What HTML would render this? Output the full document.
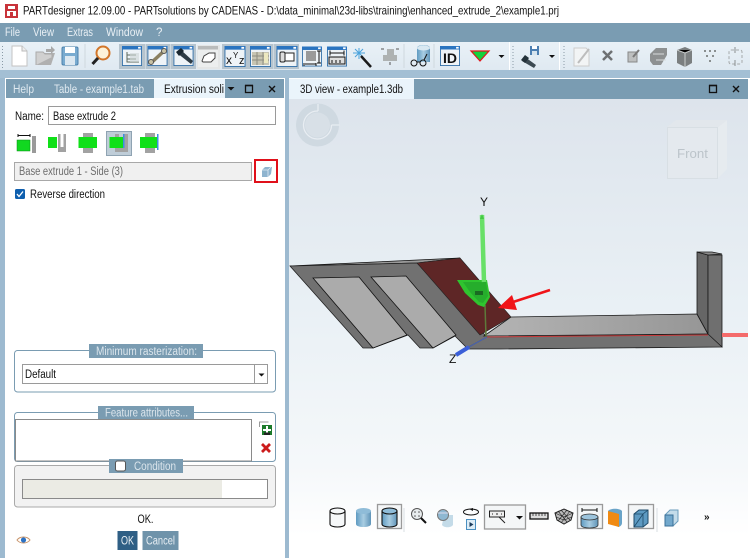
<!DOCTYPE html>
<html><head><meta charset="utf-8"><style>
html,body{margin:0;padding:0;background:#9dbad0;width:750px;height:558px;overflow:hidden}
svg{display:block;filter:blur(.3px)}
text{font-family:"Liberation Sans",sans-serif;font-size:11.5px;fill:#111}
</style></head><body>
<svg width="750" height="558" viewBox="0 0 750 558" xmlns="http://www.w3.org/2000/svg">
<defs>
<linearGradient id="vp" x1="0" y1="0" x2="0" y2="1"><stop offset="0" stop-color="#dde4ec"/><stop offset=".45" stop-color="#e9f0f5"/><stop offset=".8" stop-color="#f5f8fa"/><stop offset=".95" stop-color="#fff"/></linearGradient>
<linearGradient id="tb" x1="0" y1="0" x2="0" y2="1"><stop offset="0" stop-color="#e9f1f7"/><stop offset="1" stop-color="#dfe9f1"/></linearGradient>
<linearGradient id="cyl" x1="0" y1="0" x2="1" y2="0"><stop offset="0" stop-color="#5f9bc2"/><stop offset=".5" stop-color="#a9cde2"/><stop offset="1" stop-color="#5f94b8"/></linearGradient>
<linearGradient id="flr" x1="0" y1="0" x2="1" y2="0"><stop offset="0" stop-color="#b4b4b4"/><stop offset="1" stop-color="#969696"/></linearGradient>
<symbol id="win" viewBox="0 0 23 23"><rect x=".5" y=".5" width="22" height="22" fill="#eef3f7" stroke="#2f6da6"/><rect x="0" y="0" width="23" height="4" fill="#2a74c0"/><rect x="18.500" y="1" width="3" height="2" fill="#fff"/></symbol>
</defs>

<!-- title bar -->
<rect x="0" y="0" width="750" height="23" fill="#fff"/>
<rect x="5" y="4" width="13" height="14" fill="#c8333a"/>
<rect x="8" y="6" width="7" height="3" fill="#fff"/><rect x="7" y="11" width="9" height="5" fill="#fff"/><rect x="10" y="12" width="3" height="4" fill="#c8333a"/>
<text x="23" y="14.500" textLength="536" lengthAdjust="spacingAndGlyphs" style="font-size:12px">PARTdesigner 12.09.00 - PARTsolutions by CADENAS - D:\data_minimal\23d-libs\training\enhanced_extrude_2\example1.prj</text>

<!-- menu -->
<rect x="0" y="23" width="750" height="19" fill="#7a9cb2"/>
<text x="5" y="36" textLength="15" lengthAdjust="spacingAndGlyphs" style="fill:#e8eff4">File</text>
<text x="33" y="36" textLength="21" lengthAdjust="spacingAndGlyphs" style="fill:#e8eff4">View</text>
<text x="67" y="36" textLength="26" lengthAdjust="spacingAndGlyphs" style="fill:#e8eff4">Extras</text>
<text x="106" y="36" textLength="37" lengthAdjust="spacingAndGlyphs" style="fill:#e8eff4">Window</text>
<text x="156" y="36" style="fill:#e8eff4">?</text>

<!-- toolbar -->
<rect x="0" y="42" width="750" height="28" fill="url(#tb)"/>
<rect x="0" y="70" width="750" height="8" fill="#a3bfd4"/>
<rect x="509" y="42" width="1" height="28" fill="#fff"/><rect x="559" y="42" width="1" height="28" fill="#fff"/>
<path d="M2.500 46v22M513 46v22M564 46v22" stroke="#8a9aa6" stroke-width="1" stroke-dasharray="1 2"/>
<!-- new -->
<path d="M12 46h10l5 5v15H12z" fill="#fff" stroke="#c3c3c3"/><path d="M22 46v5h5" fill="#eee" stroke="#bbb"/>
<!-- open -->
<path d="M36 65l4-12h15l-4 12z" fill="#b0b0b0"/><path d="M36 65V52h7l2 2h7v3" fill="#d0d0d0" stroke="#aaa"/><path d="M46 49h5v-3l4 4-4 4v-2h-5z" fill="#a8a8a8"/>
<!-- save -->
<rect x="62" y="47" width="16" height="18" rx="1.500" fill="#79abd0" stroke="#4d82ab"/><rect x="65" y="47" width="10" height="6" fill="#fff"/><rect x="65" y="56" width="10" height="9" fill="#dce8f1"/>
<path d="M85 44v24" stroke="#cfd8de"/>
<!-- search -->
<circle cx="103" cy="53" r="6.500" fill="#fdf2d8" stroke="#d2762a" stroke-width="2"/><path d="M98 58l-5.500 6" stroke="#222" stroke-width="3"/>
<!-- pressed backgrounds -->
<g fill="#b6c4ce"><rect x="119" y="44" width="26" height="25"/><rect x="145.500" y="44" width="25" height="25"/><rect x="171" y="44" width="25" height="25"/><rect x="222" y="44" width="26" height="25"/><rect x="247.500" y="44" width="26" height="25"/><rect x="274" y="44" width="25" height="25"/></g>
<rect x="197" y="45" width="23" height="24" fill="#e4e6e6"/>
<!-- window icons -->
<use href="#win" x="122" y="46" width="20" height="20"/>
<path d="M127 52v10h12M127 55h9M127 59h9" fill="none" stroke="#5d6a5d"/><rect x="130" y="53" width="9" height="9" fill="#cdd6d6" opacity=".6"/>
<use href="#win" x="147" y="46" width="21" height="20"/>
<path d="M151 63l13-12" stroke="#8b8060" stroke-width="3.500"/><circle cx="151" cy="62" r="2.500" fill="#c9c2a5" stroke="#555"/><circle cx="164" cy="51" r="2.500" fill="#c9c2a5" stroke="#555"/>
<use href="#win" x="173" y="46" width="21" height="20"/>
<path d="M177 53l4-3 12 11-2 3z" fill="#2e3b44"/><path d="M176 52l5-4 3 3-5 5z" fill="#1c2830"/>
<rect x="198" y="46" width="20" height="21" fill="#eceeee"/><rect x="198" y="46" width="20" height="3.500" fill="#b9bbbb"/>
<path d="M202 61l2-5 5-3h6v5l-4 4h-8z" fill="#fff" stroke="#444"/>
<use href="#win" x="224" y="46" width="22" height="21"/>
<text x="226" y="64" style="font-size:12px">x</text><text x="233" y="58" style="font-size:8px">Y</text><text x="239" y="64" style="font-size:11px">z</text>
<use href="#win" x="250" y="46" width="21" height="21"/>
<rect x="252" y="52" width="17" height="13" fill="#c7c5b3"/><path d="M252 56h17M252 60h17M257 52v13M263 52v13" stroke="#8d8d80"/><rect x="264" y="53" width="4" height="10" fill="#ece8c0"/>
<use href="#win" x="276" y="46" width="22" height="21"/>
<rect x="282" y="53" width="12" height="8" fill="#fff" stroke="#222"/><rect x="280" y="52" width="5" height="10" rx="1.500" fill="#ddd" stroke="#222"/>
<use href="#win" x="302" y="46" width="20" height="21"/>
<rect x="306" y="51" width="10" height="10" fill="#9a9a9a"/><path d="M319 51v12M305 64h11M317 51h4M317 63h4M304 63v3M316 63v3" stroke="#111"/>
<use href="#win" x="327" y="46" width="20" height="21"/>
<rect x="329" y="57" width="16" height="7" fill="#ddd" stroke="#111"/><path d="M330 53h14M330 50.500v5M344 50.500v5M332 60v3M336 60v3M340 60v3" stroke="#111"/>
<path d="M359 48v11M353 53h12M355 49l8 8M363 49l-8 8" stroke="#4aa3dc"/><path d="M361 56l10 11" stroke="#1a1a1a" stroke-width="2.500"/>
<!-- right tool icons -->
<g fill="#aeb2b2"><rect x="387" y="49" width="7" height="6"/><rect x="383" y="55" width="7" height="6"/><rect x="390" y="55" width="7" height="6"/></g>
<path d="M381 49h3M396 49h3M390 62v3" stroke="#555"/>
<path d="M404 44v24" stroke="#cfd8de"/>
<path d="M417 48c0-4 13-4 13 0v14h-13z" fill="url(#cyl)"/><ellipse cx="423.500" cy="48" rx="6.500" ry="2.500" fill="#d8e8f2"/>
<circle cx="414" cy="63" r="3" fill="none" stroke="#111"/><circle cx="423" cy="63" r="3" fill="none" stroke="#111"/><path d="M417 62h3M424 60l3-6" stroke="#111"/>
<path d="M434 44v24" stroke="#cfd8de"/>
<use href="#win" x="440" y="45" width="20" height="22"/>
<text x="443" y="63" textLength="14" lengthAdjust="spacingAndGlyphs" style="font-size:14px;font-weight:bold">ID</text>
<path d="M471 51h18l-9 10z" fill="#14d23c" stroke="#e0161c" stroke-width="1.200"/>
<path d="M498.500 55h6l-3 3z" fill="#111"/>
<path d="M522 61l3-4 11 8-2 3z" fill="#3c4a52"/><path d="M521 60l4-5 4 3-4 5z" fill="#24323a"/><rect x="530" y="46" width="9" height="9" fill="#4c7fb2"/><rect x="532" y="46" width="5" height="3" fill="#fff"/><rect x="532" y="51" width="5" height="4" fill="#d6e4ee"/>
<path d="M549 55h6l-3 3z" fill="#111"/>
<path d="M574 48h12l3 3v15h-15z" fill="#f2f4f5" stroke="#ccc"/><path d="M578 63l11-14" stroke="#bdbdbd" stroke-width="2"/>
<path d="M603 51l9 9M612 51l-9 9" stroke="#6e7173" stroke-width="2.500"/>
<rect x="628" y="52" width="9" height="10" fill="#bdbfbf" stroke="#888"/><path d="M633 57l6-7" stroke="#7a7a7a" stroke-width="2"/>
<path d="M650 54l6-6h11v7l-6 10h-8l-3-4z" fill="#8e9192"/><path d="M653 54h11M656 60h10" stroke="#d8dcdc"/>
<path d="M677 50l8-3 7 3v13l-7 4-8-4z" fill="#7b7f80"/><path d="M677 50l8 3 7-3M685 53v14" stroke="#c8cccc"/>
<g fill="#8a8f90"><rect x="704" y="50" width="2" height="2"/><rect x="709" y="50" width="2" height="2"/><rect x="714" y="50" width="2" height="2"/><rect x="706" y="55" width="2" height="2"/><rect x="712" y="55" width="2" height="2"/><rect x="709" y="60" width="2" height="2"/></g>
<rect x="729" y="50" width="13" height="14" rx="2" fill="none" stroke="#a5a9aa" stroke-dasharray="3 2"/><path d="M735 47v6M735 60v6" stroke="#8a8f90"/>

<!-- LEFT PANEL -->
<rect x="5" y="78" width="280" height="480" fill="#fff"/>
<rect x="6" y="79" width="148" height="19" fill="#7a9cb2"/>
<rect x="154" y="79" width="71" height="19" fill="#eaf4fb"/>
<rect x="225" y="79" width="59" height="19" fill="#7a9cb2"/>
<text x="13" y="93" textLength="21" lengthAdjust="spacingAndGlyphs" style="fill:#dfe9f0">Help</text>
<text x="54" y="93" textLength="90" lengthAdjust="spacingAndGlyphs" style="fill:#dfe9f0">Table - example1.tab</text>
<text x="164" y="93" textLength="60" lengthAdjust="spacingAndGlyphs">Extrusion soli</text>
<path d="M227.500 87h7l-3.500 3.500z" fill="#111"/>
<rect x="245.500" y="85.500" width="7" height="7" fill="none" stroke="#111" stroke-width="1.300"/><path d="M245 85.500h8" stroke="#111" stroke-width="1.500"/>
<path d="M269 86l6 6M275 86l-6 6" stroke="#111" stroke-width="1.400"/>

<text x="15" y="120" textLength="29" lengthAdjust="spacingAndGlyphs">Name:</text>
<rect x="48.500" y="106.500" width="227" height="18" fill="#fff" stroke="#9a9a9a"/>
<text x="53" y="120" textLength="63" lengthAdjust="spacingAndGlyphs">Base extrude 2</text>

<!-- extrude icons -->
<rect x="106.500" y="131.500" width="25" height="24" fill="#bfcdd8" stroke="#8fa3b2"/>
<rect x="17" y="140" width="13" height="11" fill="#11d820" stroke="#0a8a18" stroke-width=".5"/><rect x="32" y="136" width="4" height="17" fill="#9a9a9a"/><path d="M18 135.500h12" stroke="#111"/><path d="M18 134v3M30 134v3" stroke="#111"/>
<rect x="48" y="137" width="9" height="11" fill="#10e018"/><path d="M58 134h8v18h-8zM60.500 134v13h3v-13z" fill="#a2a2a2" fill-rule="evenodd"/>
<rect x="83" y="133" width="10" height="20" fill="#a2a2a2"/><rect x="78.500" y="137" width="18.500" height="11" fill="#10e018"/>
<path d="M115 134h13v18h-13z" fill="#a2a2a2"/><rect x="119" y="134" width="4" height="13" fill="#bfcdd8"/><rect x="109.500" y="137" width="13.500" height="11" fill="#10e018"/><rect x="123" y="134" width="1.500" height="14" fill="#3c8fe0"/>
<rect x="145" y="133" width="10" height="20" fill="#a2a2a2"/><rect x="140" y="137" width="17" height="11" fill="#10e018"/><rect x="157" y="134" width="1.500" height="16" fill="#3c8fe0"/>

<rect x="14.500" y="162.500" width="237" height="18" fill="#f0f0f0" stroke="#a8a8a8"/>
<text x="19" y="175" textLength="104" lengthAdjust="spacingAndGlyphs" style="fill:#6d6d6d">Base extrude 1 - Side (3)</text>
<rect x="255" y="160" width="22" height="22" fill="#fff" stroke="#e0101a" stroke-width="2"/>
<path d="M262 170l3-3h7l-1 7-3 3h-6z" fill="#8fb4cf"/><path d="M262 170h6v7M268 170l3-3" stroke="#e0ecf4" fill="none" stroke-width=".8"/>
<rect x="15" y="189" width="10" height="10" rx="1.500" fill="#0f5fae"/>
<path d="M17 194l2 2.500 4-5" fill="none" stroke="#fff" stroke-width="1.300"/>
<text x="30" y="198" textLength="75" lengthAdjust="spacingAndGlyphs">Reverse direction</text>

<!-- Group 1 -->
<rect x="14.500" y="350.500" width="261" height="41.500" rx="3" fill="#fff" stroke="#7a9cb2"/>
<rect x="89" y="344" width="114" height="14" fill="#7a9cb2"/>
<text x="96" y="355" textLength="101" lengthAdjust="spacingAndGlyphs" style="fill:#dbe5ec">Minimum rasterization:</text>
<rect x="22.500" y="364.500" width="245" height="19" fill="#fff" stroke="#9a9a9a"/>
<path d="M254.500 364.500v19" stroke="#9a9a9a"/>
<path d="M258.500 373.500h6l-3 3z" fill="#111"/>
<text x="25" y="378" textLength="31" lengthAdjust="spacingAndGlyphs">Default</text>

<!-- Group 2 -->
<rect x="14.500" y="412.500" width="261" height="49" rx="3" fill="#fff" stroke="#7a9cb2"/>
<rect x="15.500" y="419.500" width="236" height="41.500" fill="#fff" stroke="#8a8a8a"/>
<rect x="98" y="406" width="96" height="13" fill="#7a9cb2"/>
<text x="105" y="416.500" textLength="83" lengthAdjust="spacingAndGlyphs" style="fill:#dbe5ec">Feature attributes...</text>
<path d="M259.500 427v-5h9" fill="none" stroke="#999"/>
<rect x="262" y="425" width="10" height="10" fill="#1b7a2a"/><path d="M267 426v8M263 430h8" stroke="#fff" stroke-width="2"/><rect x="264" y="432.500" width="6" height="2.500" fill="#222"/>
<path d="M262 444l8 8M270 444l-8 8" stroke="#cc1c1c" stroke-width="2.800"/>

<!-- Group 3 -->
<rect x="14.500" y="465.500" width="261" height="41.500" rx="3" fill="#f2f2f2" stroke="#a9a9a9"/>
<rect x="109" y="459" width="74" height="14" fill="#7a9cb2"/>
<rect x="115.500" y="461" width="10" height="10" rx="2" fill="#fff" stroke="#555"/>
<text x="134" y="470" textLength="42" lengthAdjust="spacingAndGlyphs" style="fill:#dbe5ec">Condition</text>
<rect x="22.500" y="479.500" width="245" height="19" fill="#fff" stroke="#8a8a8a"/>
<rect x="23" y="480" width="199" height="18" fill="#ebebe4"/>

<text x="137.500" y="523" textLength="16" lengthAdjust="spacingAndGlyphs">OK.</text>
<!-- eye -->
<path d="M17 540c3-4 10-4 13 0-3 4-10 4-13 0z" fill="#fff" stroke="#c8946a"/><circle cx="23.500" cy="540" r="2.600" fill="#2c72c4"/>
<rect x="117.500" y="531" width="20" height="19" fill="#2f5f85"/>
<rect x="142.500" y="531" width="36" height="19" fill="#6f93aa"/>
<text x="121" y="544.500" textLength="13" lengthAdjust="spacingAndGlyphs" style="fill:#e8eff4">OK</text>
<text x="146" y="544.500" textLength="29" lengthAdjust="spacingAndGlyphs" style="fill:#e8eff4">Cancel</text>

<!-- RIGHT PANEL -->
<rect x="289" y="78" width="461" height="480" fill="#fff"/>
<rect x="289" y="99" width="459" height="459" fill="url(#vp)"/>
<rect x="289" y="79" width="125" height="20" fill="#eaf4fb"/>
<rect x="414" y="79" width="334" height="20" fill="#7a9cb2"/>
<text x="300" y="93" textLength="103" lengthAdjust="spacingAndGlyphs">3D view - example1.3db</text>
<rect x="709.500" y="85.500" width="7" height="7" fill="none" stroke="#111" stroke-width="1.300"/><path d="M709 85.500h8" stroke="#111" stroke-width="1.500"/>
<path d="M733 86l6 6M739 86l-6 6" stroke="#111" stroke-width="1.400"/>

<!-- rotation widget -->
<circle cx="317.500" cy="125" r="21.500" fill="#cfd9e1"/>
<circle cx="317.500" cy="125" r="12.500" fill="#d8e0e7"/>
<path d="M318 111A14 14 0 1 0 331.500 125" fill="none" stroke="#e8edf2" stroke-width="1.300"/>
<path d="M318 104v7M331.500 125h8" stroke="#e8edf2" stroke-width="1.300"/>
<!-- cube -->
<path d="M718 127l9-7v49l-9 9z" fill="#e6ebef"/><path d="M667 127l9-7h51l-9 7z" fill="#e2e7ec"/>
<rect x="667.500" y="127.500" width="50" height="51" fill="#e4e9ee" stroke="#d8dfe4"/>
<text x="677" y="158" textLength="31" lengthAdjust="spacingAndGlyphs" style="font-size:13px;fill:#bcc4ca">Front</text>

<!-- 3D model -->
<path d="M290 266L460 258L417 263z" fill="#999" stroke="#111" stroke-width=".7"/>
<path d="M290 266L417 263L487 337L467 348L455 336L433 348H420L408 335L373 348H363z" fill="#717171" stroke="#222" stroke-width=".8"/>
<path d="M313 278L359 277L407 335L373 348z" fill="#ababab" stroke="#111" stroke-width=".8"/>
<path d="M371 277L406 276L456 335L433 348z" fill="#ababab" stroke="#111" stroke-width=".8"/>
<path d="M417 263L460 258L511 317L480 335z" fill="#5e2626" stroke="#222" stroke-width=".6"/>
<path d="M484 336L511 317L697 314L708 334z" fill="url(#flr)" stroke="#1a1a1a" stroke-width=".8"/>
<path d="M467 348L487 337L708 334L722 334V347L500 349H467z" fill="#717171" stroke="#1a1a1a" stroke-width=".8"/>
<path d="M697 252L708 255V334L697 314z" fill="#666" stroke="#1a1a1a" stroke-width=".8"/>
<path d="M708 255H722V347L708 334z" fill="#6f6f6f" stroke="#1a1a1a" stroke-width=".8"/>
<path d="M697 252L712 252L722 254L708 255z" fill="#8d8d8d" stroke="#1a1a1a" stroke-width=".8"/>
<path d="M485 337L708 335" stroke="#c83a3a" stroke-width="1"/>
<rect x="722" y="333" width="26" height="4" fill="#f46b6b"/>
<!-- axes -->
<path d="M485 305L486 337" stroke="#5d7a3a" stroke-width="1.500"/>
<path d="M457 280H487L490 297L484 307L478 305L465 293z" fill="#2fc42f"/>
<path d="M463 282H486L488 296L483 303L479 302L470 292z" fill="#26ad2c"/>
<rect x="475" y="291" width="8" height="4" fill="#1a6a22"/>
<path d="M482 215L484 282" stroke="#68e068" stroke-width="4.500"/>
<path d="M482 214l-2 5h4z" fill="#46c846"/>
<path d="M487 337L467 348" stroke="#4a64b0" stroke-width="1"/>
<path d="M469 347L456 355" stroke="#3b5fd8" stroke-width="4"/>
<text x="480" y="206" style="font-size:12px">Y</text>
<text x="449" y="363" style="font-size:12px">Z</text>
<!-- red arrow -->
<path d="M550 290L510 303" stroke="#f01418" stroke-width="2.600"/>
<path d="M498 308L512 295L517 310z" fill="#f01418"/>

<!-- Bottom toolbar -->
<rect x="377.500" y="504.500" width="24" height="24" fill="#f4f6f7" stroke="#9a9a9a" stroke-width="1.300"/>
<rect x="484.500" y="505" width="41" height="24" fill="#f4f6f7" stroke="#9a9a9a" stroke-width="1.300"/>
<rect x="577.500" y="504.500" width="25" height="24" fill="#f4f6f7" stroke="#9a9a9a" stroke-width="1.300"/>
<rect x="628.500" y="504.500" width="25" height="24" fill="#f4f6f7" stroke="#9a9a9a" stroke-width="1.300"/>
<!-- cyl 1 -->
<path d="M330 511v13c0 4 15 4 15 0v-13" fill="#f6f8f9" stroke="#111" stroke-width="1.100"/><ellipse cx="337.500" cy="511" rx="7.500" ry="3" fill="#f6f8f9" stroke="#111" stroke-width="1.100"/>
<!-- cyl 2 -->
<path d="M356 511v13c0 4 15 4 15 0v-13z" fill="url(#cyl)"/><ellipse cx="363.500" cy="511" rx="7.500" ry="3" fill="#8fbcd8"/>
<!-- cyl 3 -->
<path d="M382 511v13c0 4 15 4 15 0v-13z" fill="url(#cyl)" stroke="#111" stroke-width="1.100"/><ellipse cx="389.500" cy="511" rx="7.500" ry="3" fill="#8fbcd8" stroke="#111" stroke-width="1.100"/>
<path d="M404 508v24" stroke="#d8dee2"/>
<!-- zoom -->
<circle cx="417" cy="514" r="5.500" fill="#e8ecee" stroke="#555"/><path d="M421 518l5 5" stroke="#111" stroke-width="2"/><g fill="#555"><circle cx="415" cy="512" r=".8"/><circle cx="419" cy="512" r=".8"/><circle cx="415" cy="516" r=".8"/><circle cx="419" cy="516" r=".8"/></g>
<!-- zoom fit -->
<path d="M444 515h9v10c-2 3-9 3-11 0z" fill="#c4dbe8"/><circle cx="443" cy="515" r="5.500" fill="#8fb8d2" stroke="#777"/><path d="M438 513h10" stroke="#dde"/>
<!-- rotate -->
<ellipse cx="471" cy="512" rx="7.500" ry="3" fill="none" stroke="#111"/><path d="M469 509l4-1v3z" fill="#111"/>
<rect x="466.500" y="519.500" width="9" height="10" fill="#dcecf6" stroke="#4a8fc0"/><path d="M469.500 522l4 2.500-4 2.500z" fill="#1a3a5a"/>
<!-- measure dropdown -->
<rect x="489.500" y="511" width="15" height="6" fill="#eee" stroke="#222"/><path d="M492 514h1M496 514h2M501 514h1M499 517l6 6" stroke="#222"/>
<path d="M516 516h7l-3.500 3.500z" fill="#111"/>
<!-- ruler -->
<rect x="530" y="513" width="18" height="6" fill="#ddd" stroke="#111" stroke-width="1.300"/><path d="M533 513v3M536 513v3M539 513v3M542 513v3M545 513v3" stroke="#111" stroke-width=".7"/>
<!-- mesh -->
<path d="M555 513l9-4 9 4-2 7-7 4-7-4z" fill="#bbb" stroke="#222"/><path d="M558 511l9 11M561 510l9 10M567 510l-9 11M570 511l-9 12M555 513l9 4 9-4M556 517l8 3 8-3" stroke="#222" stroke-width=".6" fill="none"/>
<!-- dim cylinder -->
<path d="M581 517v8c0 4 17 4 17 0v-8z" fill="url(#cyl)" stroke="#333" stroke-width=".8"/><ellipse cx="589.500" cy="517" rx="8.500" ry="3" fill="#9cc4dc" stroke="#333" stroke-width=".8"/><path d="M582 510h15M582 508v4M597 508v4" stroke="#111"/>
<!-- orange -->
<path d="M608 511c2-3 12-3 14 0v12c0 2-2 4-4 4z" fill="#6aa4c8"/><path d="M608 511l11 3v13l-11-3z" fill="#f08a12"/>
<!-- box -->
<path d="M634 514l5-4h9v13l-5 4h-9z" fill="#5d9ac2" stroke="#1e4a68"/><path d="M634 514h9v13M643 514l5-4M634 527l9-13" stroke="#1e4a68" fill="none" stroke-width=".8"/>
<path d="M657 508v24" stroke="#d8dee2"/>
<!-- box2 -->
<path d="M665 515l5-5h8v11l-5 5h-8z" fill="#c4dcea" stroke="#6a9cbc"/><rect x="665" y="515" width="8" height="11" fill="#72a8cc" stroke="#3a7098"/>
<text x="704" y="520" style="font-size:10px;font-weight:bold">»</text>
</svg>
</body></html>
